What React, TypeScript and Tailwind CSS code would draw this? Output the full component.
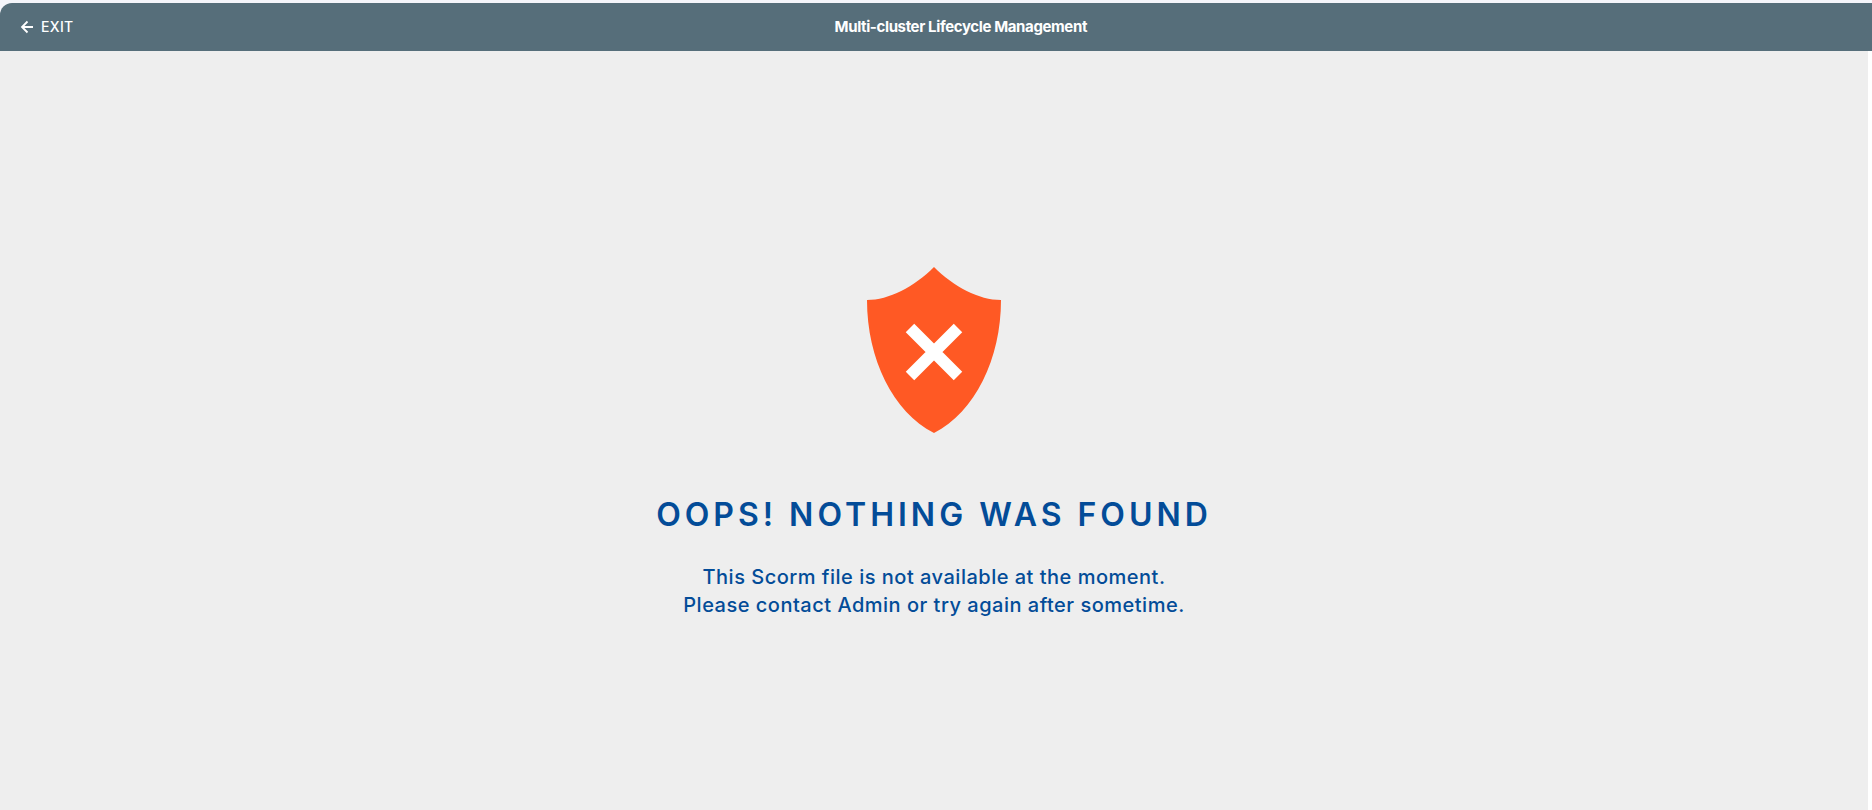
function ArrowIcon() {
  return (
    <svg width="13" height="14" viewBox="0 0 13 14" fill="none" aria-hidden="true">
      <path d="M13 7H2M7.5 1.5L2 7L7.5 12.5" stroke="currentColor" strokeWidth="1.8" />
    </svg>
  )
}

function Header({ title }: { title: string }) {
  return (
    <header className="flex h-12 items-center rounded-tl-xl bg-[#566e7a] pr-6 pl-5 text-white">
      <button type="button" className="flex items-center gap-2 text-sm font-medium tracking-wide">
        <ArrowIcon />
        EXIT
      </button>
      <h1 className="flex-1 text-center text-[15px] font-bold tracking-tight">{title}</h1>
    </header>
  )
}

function ErrorShield() {
  return (
    <svg width="134" height="166" viewBox="0 0 134 166" aria-hidden="true">
      <path
        d="M67 0C47 20 22 33 0 33C0 92 26 145 67 166C108 145 134 92 134 33C112 33 87 20 67 0Z"
        fill="#ff5924"
      />
      <path d="M43 61L91 109M91 61L43 109" stroke="#fff" strokeWidth="12" />
    </svg>
  )
}

export default function App() {
  return (
    <div className="flex min-h-screen flex-col bg-[#f4f5fa] pt-[3px] font-['Inter',sans-serif]">
      <Header title="Multi-cluster Lifecycle Management" />

      <div className="flex flex-1 flex-col bg-white pr-1">
        <main className="flex flex-1 flex-col items-center justify-center bg-[#eeeeee] pt-6 text-center text-[#034c98]">
          <ErrorShield />
          <h2 className="mt-[62px] text-[32px] leading-10 font-semibold tracking-[4px]">
            OOPS! NOTHING WAS FOUND
          </h2>
          <p className="mt-7 text-xl leading-7 font-medium tracking-wide">
            This Scorm file is not available at the moment.
            <br />
            Please contact Admin or try again after sometime.
          </p>
        </main>
      </div>
    </div>
  )
}
